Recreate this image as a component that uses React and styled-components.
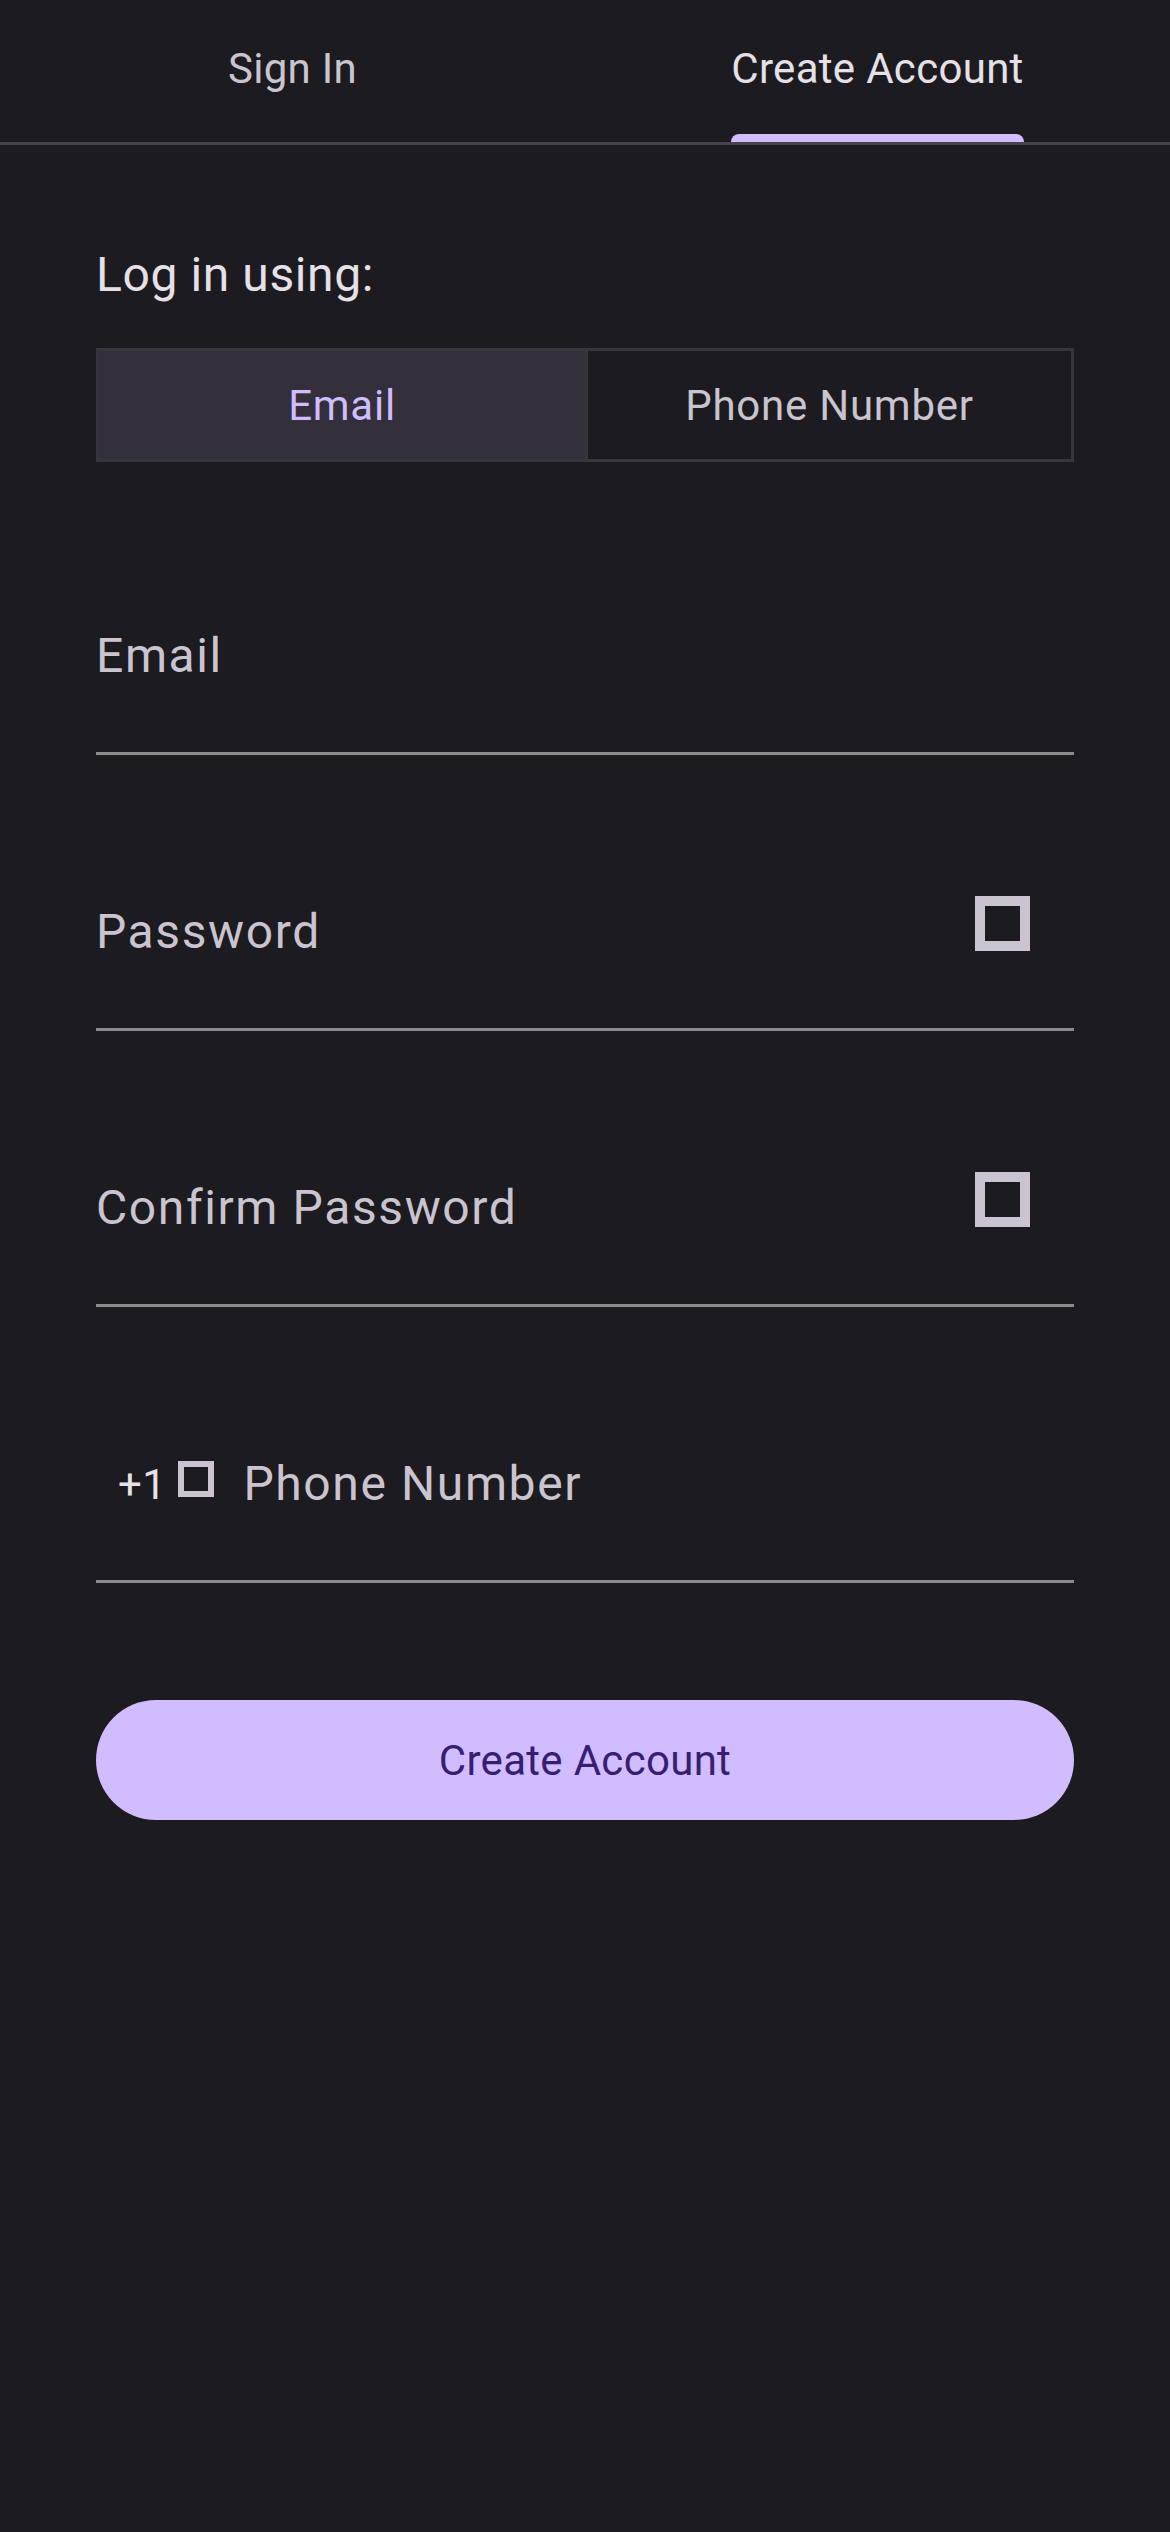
import React from "react";
import styled, { createGlobalStyle } from "styled-components";

const GlobalStyle = createGlobalStyle`
    html, body {
        margin: 0;
        padding: 0;
        background: #1c1b1f;
    }
    body {
        font-family: Roboto, "Liberation Sans", sans-serif;
        color: #e6e0e9;
    }
`;

const Page = styled.div`
    min-height: 2532px;
    background: #1c1b1f;
`;

// top tabs
const TabBar = styled.div`
    display: grid;
    grid-template-columns: 1fr 1fr;
    height: 142px;
    border-bottom: 3px solid #46444b;
`;

const Tab = styled.div`
    display: flex;
    justify-content: center;
    height: 100%;
`;

const TabLabel = styled.div`
    display: flex;
    flex-direction: column;
    justify-content: space-between;
    padding-top: 48px;
    font-size: 42px;
    line-height: 42px;
    letter-spacing: 0.3px;
    color: ${({active}) => (active ? '#e6e0e9' : '#cac4d0')};
`;

const Indicator = styled.div`
    height: 8px;
    border-radius: 8px 8px 0 0;
    background: ${({active}) => (active ? '#d0bcff' : 'transparent')};
`;

const Content = styled.div`
    padding: 0 96px;
    display: flex;
    flex-direction: column;
`;

const Heading = styled.div`
    margin-top: 106px;
    font-size: 48px;
    line-height: 48px;
    letter-spacing: 0.6px;
    color: #e6e0e9;
`;

const Segmented = styled.div`
    margin-top: 49px;
    display: grid;
    grid-template-columns: 1fr 1fr;
    height: 114px;
    border: 3px solid #38363d;
    box-sizing: border-box;
`;

const Segment = styled.div`
    display: flex;
    align-items: center;
    justify-content: center;
    font-size: 42px;
    letter-spacing: 0.75px;
    background: ${({selected}) => (selected ? '#332f3b' : 'transparent')};
    color: ${({selected}) => (selected ? '#d0bcff' : '#cac4d0')};
    border-left: ${({selected}) => (selected ? 'none' : '3px solid #38363d')};
`;

const Fields = styled.div`
    margin-top: 125px;
    display: flex;
    flex-direction: column;
    gap: 108px;
`;

const Field = styled.div`
    height: 168px;
    box-sizing: border-box;
    border-bottom: 3px solid #8e8a94;
    display: flex;
    align-items: flex-start;
`;

const Label = styled.div`
    padding-top: 45px;
    font-size: 48px;
    line-height: 48px;
    letter-spacing: 1.6px;
    color: #cac4d0;
    flex: 1;
`;

// missing icon glyph, rendered as an empty box
const TrailingBox = styled.div`
    margin-top: 33px;
    margin-right: 44px;
    width: 55px;
    height: 55px;
    box-sizing: border-box;
    border: 10px solid #cac4d0;
`;

const Prefix = styled.div`
    display: flex;
    align-items: flex-start;
    padding-left: 22px;
    padding-top: 46px;
    margin-right: 29px;
    font-size: 42px;
    line-height: 48px;
    letter-spacing: 0.5px;
    color: #e6e0e9;
`;

const SmallBox = styled.div`
    margin-left: 12px;
    width: 36px;
    height: 36px;
    box-sizing: border-box;
    border: 6px solid #cac4d0;
`;

const PrimaryButton = styled.button`
    margin-top: 117px;
    height: 120px;
    border: none;
    border-radius: 60px;
    background: #d0bcff;
    color: #381e72;
    font-family: Roboto, "Liberation Sans", sans-serif;
    font-size: 42px;
    letter-spacing: 0.3px;
    padding: 0;
`;

export default function App() {
    return (
        <Page>
            <GlobalStyle/>
            <TabBar>
                <Tab>
                    <TabLabel>
                        <span>Sign In</span>
                        <Indicator/>
                    </TabLabel>
                </Tab>
                <Tab>
                    <TabLabel active>
                        <span>Create Account</span>
                        <Indicator active/>
                    </TabLabel>
                </Tab>
            </TabBar>
            <Content>
                <Heading>Log in using:</Heading>
                <Segmented>
                    <Segment selected>Email</Segment>
                    <Segment>Phone Number</Segment>
                </Segmented>
                <Fields>
                    <Field>
                        <Label>Email</Label>
                    </Field>
                    <Field>
                        <Label>Password</Label>
                        <TrailingBox/>
                    </Field>
                    <Field>
                        <Label>Confirm Password</Label>
                        <TrailingBox/>
                    </Field>
                    <Field>
                        <Prefix>
                            <span>+1</span>
                            <SmallBox/>
                        </Prefix>
                        <Label>Phone Number</Label>
                    </Field>
                </Fields>
                <PrimaryButton>Create Account</PrimaryButton>
            </Content>
        </Page>
    );
}
